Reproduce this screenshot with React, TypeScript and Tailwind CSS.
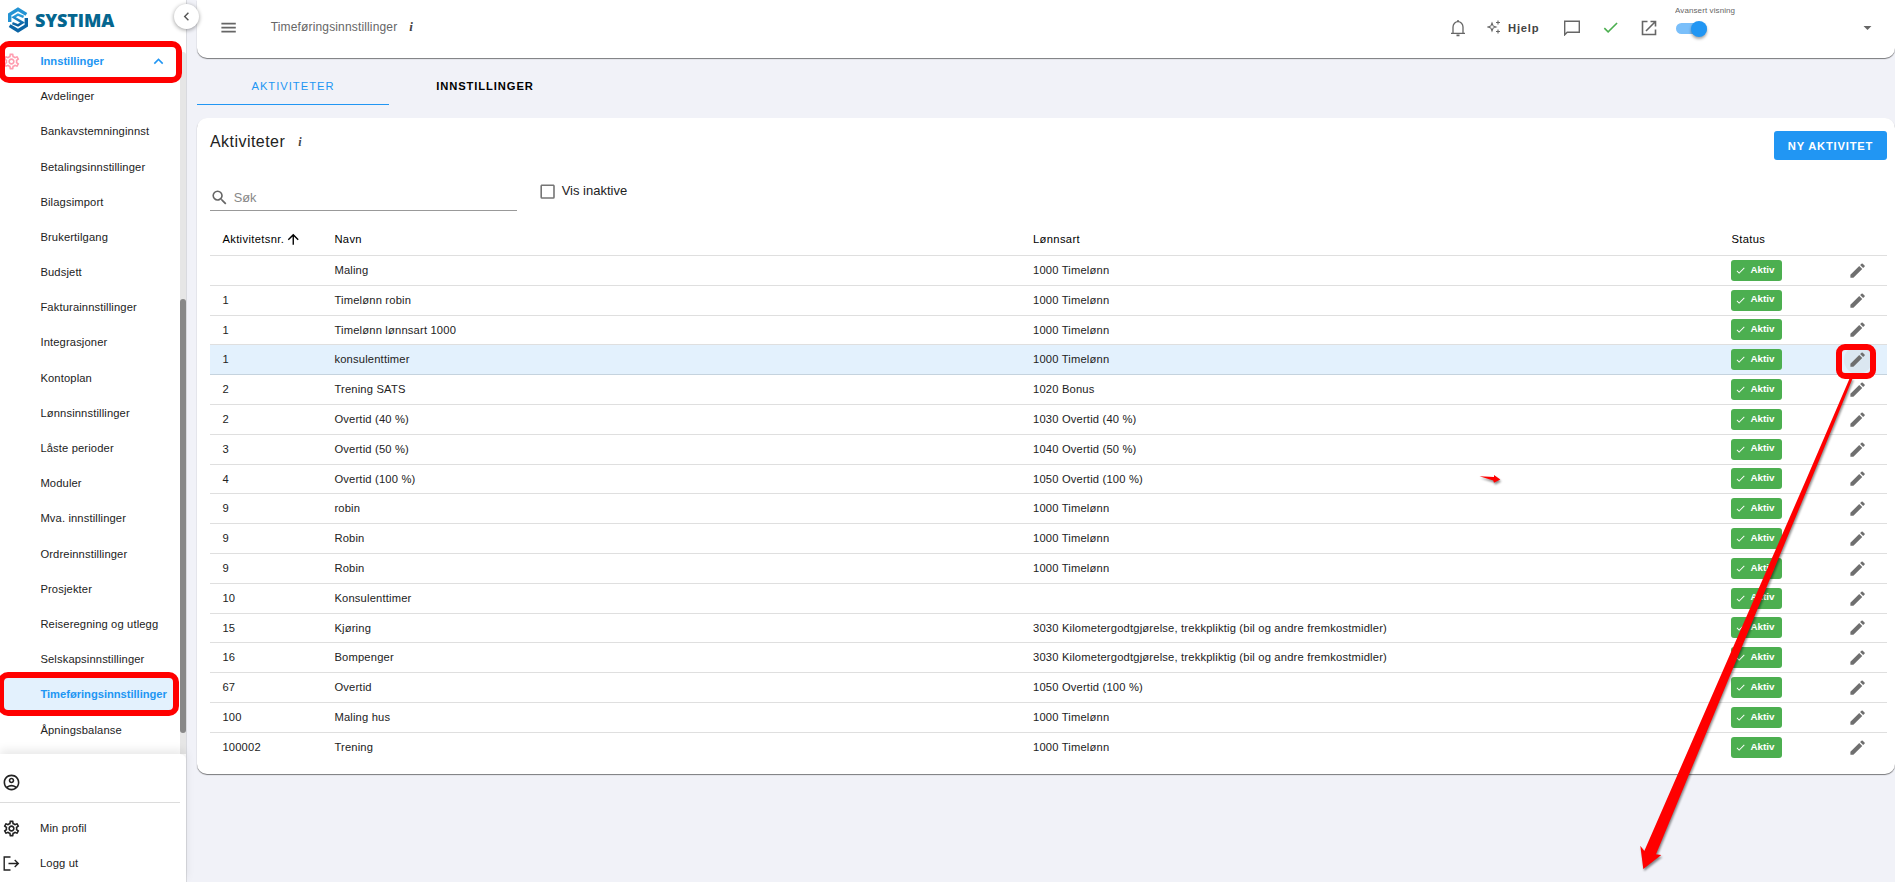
import { MdOutlineAccountCircle, MdOutlineSettings } from 'react-icons/md'

const menuItems = [
  'Avdelinger', 'Bankavstemninginnst', 'Betalingsinnstillinger', 'Bilagsimport', 'Brukertilgang', 'Budsjett',
  'Fakturainnstillinger', 'Integrasjoner', 'Kontoplan', 'Lønnsinnstillinger', 'Låste perioder', 'Moduler',
  'Mva. innstillinger', 'Ordreinnstillinger', 'Prosjekter', 'Reiseregning og utlegg', 'Selskapsinnstillinger',
  'Timeføringsinnstillinger', 'Åpningsbalanse',
]

const activities: [string, string, string][] = [
  ['', 'Maling', '1000 Timelønn'],
  ['1', 'Timelønn robin', '1000 Timelønn'],
  ['1', 'Timelønn lønnsart 1000', '1000 Timelønn'],
  ['1', 'konsulenttimer', '1000 Timelønn'],
  ['2', 'Trening SATS', '1020 Bonus'],
  ['2', 'Overtid (40 %)', '1030 Overtid (40 %)'],
  ['3', 'Overtid (50 %)', '1040 Overtid (50 %)'],
  ['4', 'Overtid (100 %)', '1050 Overtid (100 %)'],
  ['9', 'robin', '1000 Timelønn'],
  ['9', 'Robin', '1000 Timelønn'],
  ['9', 'Robin', '1000 Timelønn'],
  ['10', 'Konsulenttimer', ''],
  ['15', 'Kjøring', '3030 Kilometergodtgjørelse, trekkpliktig (bil og andre fremkostmidler)'],
  ['16', 'Bompenger', '3030 Kilometergodtgjørelse, trekkpliktig (bil og andre fremkostmidler)'],
  ['67', 'Overtid', '1050 Overtid (100 %)'],
  ['100', 'Maling hus', '1000 Timelønn'],
  ['100002', 'Trening', '1000 Timelønn'],
]

const icons = {
  menu: 'M3,6H21V8H3V6M3,11H21V13H3V11M3,16H21V18H3V16Z',
  magnify: 'M9.5,3A6.5,6.5 0 0,1 16,9.5C16,11.11 15.41,12.59 14.44,13.73L14.71,14H15.5L20.5,19L19,20.5L14,15.5V14.71L13.73,14.44C12.59,15.41 11.11,16 9.5,16A6.5,6.5 0 0,1 3,9.5A6.5,6.5 0 0,1 9.5,3M9.5,5C7,5 5,7 5,9.5C5,12 7,14 9.5,14C12,14 14,12 14,9.5C14,7 12,5 9.5,5Z',
  pencil: 'M20.71,7.04C21.1,6.65 21.1,6 20.71,5.63L18.37,3.29C18,2.9 17.35,2.9 16.96,3.29L15.12,5.12L18.87,8.87M3,17.25V21H6.75L17.81,9.93L14.06,6.18L3,17.25Z',
  checkboxBlank: 'M19,3H5C3.89,3 3,3.89 3,5V19A2,2 0 0,0 5,21H19A2,2 0 0,0 21,19V5C21,3.89 20.1,3 19,3M19,5V19H5V5H19Z',
  check: 'M21,7L9,19L3.5,13.5L4.91,12.09L9,16.17L19.59,5.59L21,7Z',
  arrowUp: 'M13,20H11V8L5.5,13.5L4.08,12.08L12,4.16L19.92,12.08L18.5,13.5L13,8V20Z',
  menuDown: 'M7,10L12,15L17,10H7Z',
  chevronUp: 'M7.41,15.41L12,10.83L16.59,15.41L18,14L12,8L6,14L7.41,15.41Z',
  chevronLeft: 'M15.41,16.58L10.83,12L15.41,7.41L14,6L8,12L14,18L15.41,16.58Z',
}

function Icon({ name, className }: { name: keyof typeof icons; className: string }) {
  return (
    <svg viewBox="0 0 24 24" className={`shrink-0 ${className}`} fill="currentColor">
      <path d={icons[name]} />
    </svg>
  )
}

function Logo() {
  return (
    <div className="flex items-center h-[33px] pt-[7px] pl-2">
      <svg viewBox="0 0 20 26" className="w-5 h-[26px] shrink-0" fill="none" strokeWidth="3.4">
        <defs>
          <linearGradient id="mark" x1="0" y1="0" x2="0" y2="1">
            <stop offset="0" stopColor="#2b9fe0" />
            <stop offset="1" stopColor="#0a5c9c" />
          </linearGradient>
        </defs>
        <path d="M1.7 15V7.4L10 2.3L18.4 7.4" stroke="#2493d3" />
        <path d="M18.3 11V18.6L10 23.7L1.6 18.6" stroke="#0b64a5" />
        <path d="M15.6 9.8L10 7.6L5.6 10.3L14.6 15.6L10 18.4L4.4 16.2" stroke="url(#mark)" strokeWidth="2.4" />
      </svg>
      <span className="ml-[7px] font-['Open_Sans'] font-extrabold text-[18px] leading-none tracking-[-0.15px] text-[#04668f]">SYSTIMA</span>
    </div>
  )
}

function Sidebar() {
  return (
    <aside className="relative w-[187px] h-full shrink-0 bg-white border-r border-[#d9dadf] flex flex-col tracking-[0.13px]">
      <Logo />
      <div className="flex-1 flex min-h-0">
        <nav className="w-[180px] overflow-hidden shrink-0 pt-[10.8px]">
          <div className="relative h-[35.2px] flex items-center pl-[40.4px] text-[#2196f3] font-bold tracking-normal">
            <MdOutlineSettings className="absolute left-[2px] size-[19px] text-[#ff9db0]" />
            <span className="flex-1">Innstillinger</span>
            <Icon name="chevronUp" className="size-[19px] mr-[12.5px] mt-px" />
          </div>
          {menuItems.map(item => (
            item === 'Timeføringsinnstillinger'
              ? <div key={item} className="h-[35.2px] flex items-center pl-[40.4px] mr-[6px] bg-[#e3f1fd] text-[#2196f3] font-bold tracking-[-0.03px] whitespace-nowrap">{item}</div>
              : <div key={item} className="h-[35.2px] flex items-center pl-[40.4px] whitespace-nowrap">{item}</div>
          ))}
        </nav>
        <div className="w-[6px] mt-[19px] bg-[#e6e6e6] rounded-t-[3px]">
          <div className="mt-[247px] h-[434px] bg-[#888888] rounded-[3px]" />
        </div>
      </div>
      <div className="h-[128px] shrink-0 rounded-tr-[6px] bg-white shadow-[0_-4px_10px_rgba(0,0,0,0.09)]">
        <div className="h-[49px] w-[180px] border-b border-[#dcdcdc] flex items-center pt-[9px] pl-[2px]">
          <MdOutlineAccountCircle className="size-[19px]" />
        </div>
        <div className="mt-[8px] h-[35px] flex items-center pl-[2px]">
          <MdOutlineSettings className="size-[19px] mr-[19px]" />
          Min profil
        </div>
        <div className="h-[35px] flex items-center pl-[2px]">
          <svg viewBox="0 0 19 19" className="size-[19px] mr-[19px]" fill="none" stroke="currentColor" strokeWidth="1.4">
            <path d="M8.5 3H2.2V16H8.5M6.5 9.5H16M12.7 6L16.3 9.5L12.7 13" />
          </svg>
          Logg ut
        </div>
      </div>
      <button className="absolute left-[174px] top-[4px] size-[25px] rounded-full bg-white flex items-center justify-center text-[#555] shadow-[0_1px_4px_rgba(0,0,0,0.4)]">
        <Icon name="chevronLeft" className="size-[17px]" />
      </button>
    </aside>
  )
}

function Header() {
  return (
    <header className="h-[58px] bg-white rounded-b-[10px] flex items-center pb-[3px] pl-[22px] text-[#666] shadow-[0_1px_1px_rgba(0,0,0,0.5)]">
      <Icon name="menu" className="size-[19.2px]" />
      <span className="ml-[32.5px] -mt-px text-[12px] tracking-[0.155px]">Timeføringsinnstillinger</span>
      <span className="ml-[12px] -mt-px font-['Liberation_Serif'] italic font-bold text-[13px] text-[#444]">i</span>
      <div className="ml-auto flex items-center">
        <svg viewBox="0 0 16 18" className="w-4 h-[18px]" fill="none" stroke="currentColor" strokeWidth="1.3">
          <path d="M1 14.3H15M3 14.3V8A5 5.3 0 0 1 13 8V14.3" />
          <path d="M6.5 16.4H9.5M7 2H9" strokeWidth="1.6" />
        </svg>
        <svg viewBox="0 0 14 14" className="w-3.5 h-3.5 ml-[21px] -mt-[2px]" fill="none" stroke="currentColor" strokeWidth="1.1">
          <path d="M5 3L6.1 5.9L9 7L6.1 8.1L5 11L3.9 8.1L1 7L3.9 5.9Z" />
          <path d="M11 0.5V4.5M9 2.5H13M11 9.5V13.5M9 11.5H13" />
        </svg>
        <span className="ml-[7px] mt-[2px] w-[32px] text-[11.2px] font-bold tracking-[0.8px] text-[#444]">Hjelp</span>
        <svg viewBox="0 0 16 16" className="size-4 ml-[24px]" fill="none" stroke="currentColor" strokeWidth="1.4">
          <path d="M0.7 14.8V1.2H15.3V12.2H3.2Z" />
        </svg>
        <Icon name="check" className="size-[19px] ml-[21px] text-[#4caf50]" />
        <svg viewBox="0 0 16 16" className="size-4 ml-[21px]" fill="none" stroke="currentColor" strokeWidth="1.6">
          <path d="M6.5 1.5H1.5V14.5H14.5V9.5M9.5 1.5H14.5V6.5M14.2 1.8L5 11" />
        </svg>
        <div className="ml-[18px] w-[61px] h-[50px] -mt-px">
          <div className="text-[8px] leading-[10px] pt-[4px] h-[13px] tracking-[0.1px] whitespace-nowrap overflow-hidden">Avansert visning</div>
          <div className="mt-[8px] ml-[1px] w-[31px] h-[11px] rounded-full bg-[#7abffa] flex items-center justify-end">
            <div className="size-4 shrink-0 rounded-full bg-[#2196f3] shadow-[0_2px_3px_rgba(0,0,0,0.35)]" />
          </div>
        </div>
        <Icon name="menuDown" className="size-[19px] ml-[122px] mr-[18px]" />
      </div>
    </header>
  )
}

const cols = 'grid grid-cols-[112px_698.6px_698.4px_1fr] items-center *:pl-[12.4px]'

export default function App() {
  return (
    <div className="relative w-[1895px] h-[882px] overflow-hidden flex bg-[#f1f2f8] font-['Liberation_Sans',sans-serif] text-[11.2px] text-[#222]">
      <Sidebar />
      <main className="flex-1 pl-[10px] min-w-0">
        <Header />
        <div className="flex h-[47px] text-black">
          <div className="w-[192px] border-b border-[#2196f3] flex items-center justify-center tracking-[1px] pt-[11px] text-[#2196f3]">AKTIVITETER</div>
          <div className="w-[192px] flex items-center justify-center pb-px font-bold tracking-[0.92px] pt-[11px]">INNSTILLINGER</div>
        </div>

        <section className="mt-[13px] h-[656px] bg-white rounded-[10px] pl-[13px] pr-[8px] shadow-[0_1px_1px_rgba(0,0,0,0.5)]">
          <div className="flex justify-between h-[60px] pt-[13px]">
            <div className="flex items-center h-[21px]">
              <h1 className="text-[16px] tracking-[0.45px]">Aktiviteter</h1>
              <span className="ml-[13px] font-['Liberation_Serif'] italic font-bold text-[12px] text-[#444]">i</span>
            </div>
            <button className="w-[113px] h-[29px] pt-[2px] rounded-[3px] bg-[#2196f3] text-white font-bold tracking-[0.8px]">NY AKTIVITET</button>
          </div>
          <div className="flex h-[33px]">
            <div className="w-[307px] border-b border-[#999] flex items-center text-[#888] pt-[8px]">
              <Icon name="magnify" className="size-[19.2px] text-[#666]" />
              <span className="ml-[4.5px] -mt-px text-[12.8px]">Søk</span>
            </div>
            <label className="ml-[21px] flex items-start">
              <Icon name="checkboxBlank" className="size-[19.2px] mt-[4px] text-[#757575]" />
              <span className="ml-[4.5px] mt-[3px] text-[13px]">Vis inaktive</span>
            </label>
          </div>

          <div className={`${cols} h-[45px] border-b border-[#dfdfdf] pt-[13px] tracking-[0.35px] text-black`}>
            <div className="flex items-center">Aktivitetsnr.<Icon name="arrowUp" className="size-[16.5px] ml-[1px] -mt-px" /></div>
            <div>Navn</div>
            <div>Lønnsart</div>
            <div>Status</div>
          </div>
          {activities.map(([nr, name, wage], i) => (
            <div key={i} className={`${cols} h-[29.8px] tracking-[0.18px] ${i === 3 ? 'bg-[#e3f1fd] border-b border-[#c5d3de]' : i < activities.length - 1 ? 'border-b border-[#dfdfdf]' : ''}`}>
              <div>{nr}</div>
              <div>{name}</div>
              <div>{wage}</div>
              <div className="flex items-center justify-between pr-[19px]">
                <span className="w-[51px] h-[21px] rounded-[3px] bg-[#4caf50] text-white font-bold text-[9.8px] tracking-normal flex items-center pl-[4px] pb-px">
                  <Icon name="check" className="size-[11px] mr-[4px] mt-px" />
                  Aktiv
                </span>
                <span className={`size-[28px] rounded-full flex items-center justify-center -mr-[4px] ${i === 3 ? 'bg-[#dbe7f1]' : ''}`}>
                  <Icon name="pencil" className="size-[19.2px] text-[#6f6f6f]" />
                </span>
              </div>
            </div>
          ))}
        </section>
      </main>

      {/* Guide markings on top of the page */}
      <div className="absolute left-[-1px] top-[41px] w-[183px] h-[42px] rounded-[10px] border-6 border-[#ff0000]" />
      <div className="absolute left-[-2px] top-[672px] w-[181px] h-[44px] rounded-[10px] border-6 border-[#ff0000]" />
      <div className="absolute left-[1836px] top-[344px] w-[40px] h-[35px] rounded-[9px] border-6 border-[#ff0000]" />
      <svg viewBox="0 0 1895 882" className="absolute inset-0 w-full h-full drop-shadow-[1px_2px_1px_rgba(0,0,0,0.45)]" fill="#ff0000">
        <polygon points="1849.8,378 1806,480 1644.3,851 1640.3,845.7 1643.3,869 1661.3,855 1656,854.3 1811,480 1852.8,378" />
        <polygon points="1479.5,476.3 1494,477 1494,475 1500.3,479.4 1494,482.8 1493.2,480.4" />
      </svg>
    </div>
  )
}
